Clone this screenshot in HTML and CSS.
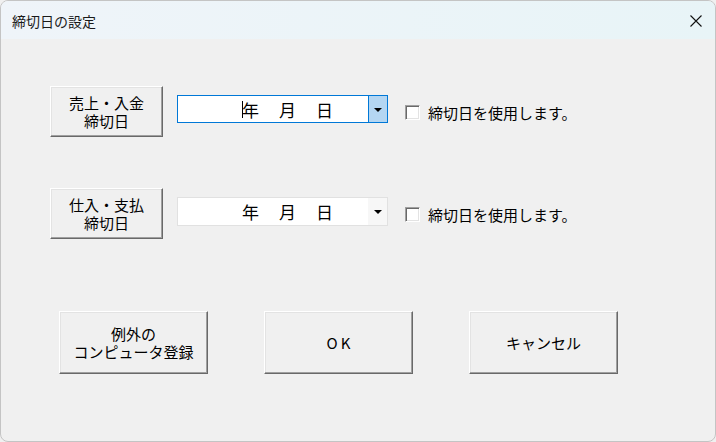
FILE: index.html
```html
<!DOCTYPE html>
<html lang="ja">
<head>
<meta charset="utf-8">
<title>締切日の設定</title>
<link rel="stylesheet" href="styles.css">
</head>
<body>
<div class="window">
  <div class="titlebar">
    <span class="title">締切日の設定</span>
    <span class="close">
      <svg width="12" height="12" viewBox="0 0 12 12"><path d="M0.5 0.5 L11.5 11.5 M11.5 0.5 L0.5 11.5" stroke="#111" stroke-width="1.1" fill="none"/></svg>
    </span>
  </div>
  <div class="content">
    <div class="row">
      <div class="btn btn-side"><span class="line">売上・入金</span><span class="line">締切日</span></div>
      <div class="combo combo-focus">
        <div class="combo-text"><span class="caret"></span><span>年</span><span>月</span><span>日</span></div>
        <div class="combo-drop"><span class="arrow"></span></div>
      </div>
      <label class="check"><span class="box"></span><span class="check-label">締切日を使用します。</span></label>
    </div>
    <div class="row row2">
      <div class="btn btn-side"><span class="line">仕入・支払</span><span class="line">締切日</span></div>
      <div class="combo">
        <div class="combo-text"><span>年</span><span>月</span><span>日</span></div>
        <div class="combo-drop"><span class="arrow"></span></div>
      </div>
      <label class="check"><span class="box"></span><span class="check-label">締切日を使用します。</span></label>
    </div>
    <div class="actions">
      <div class="btn btn-big"><span class="line">例外の</span><span class="line">コンピュータ登録</span></div>
      <div class="btn btn-big btn-ok">OK</div>
      <div class="btn btn-big">キャンセル</div>
    </div>
  </div>
</div>
</body>
</html>
```
FILE: styles.css
```css
html, body {
  margin: 0;
  padding: 0;
}
body {
  width: 716px;
  height: 442px;
  overflow: hidden;
  background: #f0f0f0;
  font-family: "Noto Sans CJK JP", "Noto Sans", sans-serif;
  color: #000;
}
.window {
  box-sizing: border-box;
  width: 716px;
  height: 442px;
  border: 1px solid #c4c4c4;
  border-radius: 8px;
  background: #f0f0f0;
  overflow: hidden;
}
.titlebar {
  height: 38px;
  display: flex;
  align-items: center;
  justify-content: space-between;
  padding: 2px 13px 0 11px;
  box-sizing: border-box;
  background: linear-gradient(to right, #eff4f9, #e8f4f7);
}
.title {
  font-size: 14px;
  color: #1a1a1a;
}
.close {
  display: flex;
  width: 12px;
  height: 12px;
}
.content {
  padding: 47px 0 0 49px;
}
.row {
  display: flex;
  align-items: flex-start;
  height: 51px;
}
.row2 {
  margin-top: 51px;
}
.btn {
  box-sizing: border-box;
  display: flex;
  flex-direction: column;
  align-items: center;
  justify-content: center;
  text-align: center;
  background: #f0f0f0;
  border: 1px solid;
  border-color: #ffffff #696969 #696969 #ffffff;
  box-shadow: inset -1px -1px 0 #a0a0a0, inset 1px 1px 0 #e3e3e3;
  font-size: 15px;
  line-height: 18px;
}
.line {
  display: block;
  height: 18px;
  line-height: 18px;
}
.btn-side {
  width: 113px;
  height: 51px;
}
.combo {
  box-sizing: border-box;
  display: flex;
  width: 211px;
  height: 29px;
  margin: 9px 0 0 14px;
  background: #fff;
  border: 1px solid #e1e1e1;
}
.combo-focus {
  border-color: #0078d7;
  height: 28px;
}
.combo-text {
  flex: 1;
  display: flex;
  align-items: center;
  gap: 20px;
  padding-left: 64px;
  font-size: 17px;
  position: relative;
}
.caret {
  position: absolute;
  left: 64px;
  top: 5px;
  width: 1px;
  height: 17px;
  background: #000;
}
.combo-drop {
  width: 19px;
  display: flex;
  align-items: center;
  justify-content: center;
  background: #f7f7f7;
}
.combo-focus .combo-drop {
  background: #b4d6f2;
  border-left: 1px solid #0078d7;
  width: 18px;
}
.arrow {
  width: 0;
  height: 0;
  border-left: 4px solid transparent;
  border-right: 4px solid transparent;
  border-top: 4px solid #000;
  margin-top: 1px;
}
.check {
  display: flex;
  align-items: center;
  margin: 18px 0 0 17px;
  height: 17px;
}
.box {
  box-sizing: border-box;
  width: 15px;
  height: 15px;
  background: #fff;
  border: 1px solid;
  border-color: #a0a0a0 #ffffff #ffffff #a0a0a0;
  box-shadow: inset 1px 1px 0 #696969, inset -1px -1px 0 #e3e3e3;
}
.check-label {
  margin-left: 8px;
  font-size: 15px;
}
.actions {
  display: flex;
  gap: 56px;
  margin: 72px 0 0 9px;
}
.btn-big {
  width: 149px;
  height: 63px;
}
.btn-ok {
  letter-spacing: 3px;
  padding-left: 3px;
}
```
